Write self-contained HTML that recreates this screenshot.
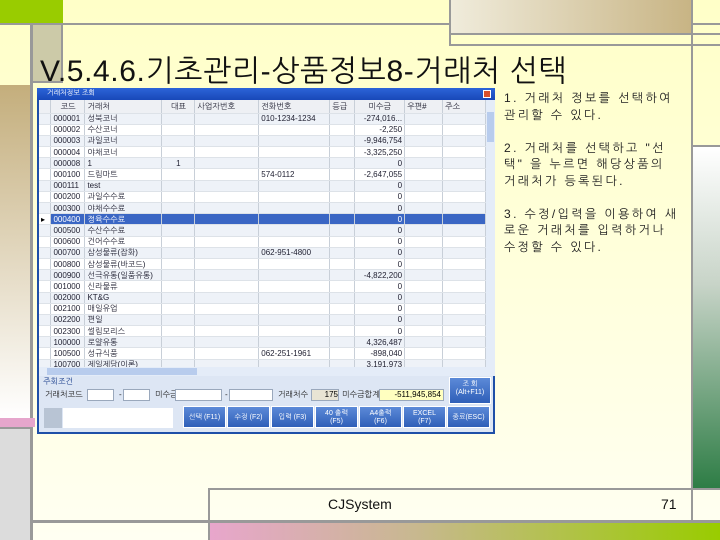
<!DOCTYPE html>
<html><head><meta charset="utf-8"><style>
*{margin:0;padding:0;box-sizing:border-box}
body{width:720px;height:540px;position:relative;overflow:hidden;background:linear-gradient(#ffffc8,#ffffe0 60%,#fffff2);font-family:"Liberation Sans","Noto Sans CJK KR",sans-serif}
.a{position:absolute}
.k{font-family:"Liberation Sans","NanumGothic","Noto Sans CJK KR",sans-serif}
table{border-collapse:collapse;font-size:8px;color:#223;table-layout:fixed}
tr{height:11.2px}
td{height:11.2px;border-right:1px solid #c8cfd8;border-bottom:1px solid #dde2e8;padding:0 2px;white-space:nowrap;overflow:hidden;line-height:9px}
tr:nth-child(even) td{background:#eef2f8}
tr td{background:#fff}
tr.sel td{background:#3a66c4;color:#fff}
td.n{text-align:right}
.btn{position:absolute;height:22px;width:43px;background:linear-gradient(#5c8ad8,#2f5fb8);color:#fff;font-size:7px;text-align:center;line-height:8px;padding-top:3px;border:1px solid #fff}
.inp{position:absolute;background:#fff;border:1px solid #9aa8bc;height:12px}
.lb{position:absolute;font-size:8px;color:#222}
.st div{white-space:nowrap}
</style></head><body>
<div class="a" style="left:0;top:0;width:63px;height:23px;background:#99cc00"></div>
<div class="a" style="left:0;top:23px;width:720px;height:2px;background:#999"></div>
<div class="a" style="left:450px;top:0;width:242px;height:33px;background:linear-gradient(90deg,#f0ecdc,#c8b484)"></div>
<div class="a" style="left:450px;top:33px;width:270px;height:2px;background:#999"></div>
<div class="a" style="left:450px;top:44px;width:270px;height:2px;background:#999"></div>
<div class="a" style="left:449px;top:0;width:2px;height:46px;background:#999"></div>
<div class="a" style="left:691px;top:0;width:2px;height:540px;background:#999"></div>
<div class="a" style="left:30px;top:23px;width:33px;height:60px;background:#cccaa8;border:2px solid #999"></div>
<div class="a" style="left:30px;top:23px;width:3px;height:517px;background:#999"></div>
<div class="a" style="left:0;top:85px;width:30px;height:333px;background:linear-gradient(#c4ae7c,#fff)"></div>
<div class="a" style="left:0;top:418px;width:35px;height:9px;background:#e6a6cc"></div>
<div class="a" style="left:0;top:427px;width:30px;height:2px;background:#999"></div>
<div class="a" style="left:0;top:429px;width:30px;height:111px;background:#dcdcdc"></div>
<div class="a" style="left:693px;top:145px;width:27px;height:2px;background:#999"></div>
<div class="a" style="left:693px;top:147px;width:27px;height:343px;background:linear-gradient(#fff,#c8d4c8 40%,#2c7c44)"></div>
<div class="a" style="left:208px;top:488px;width:512px;height:2px;background:#999"></div>
<div class="a" style="left:208px;top:488px;width:2px;height:52px;background:#999"></div>
<div class="a" style="left:30px;top:520px;width:690px;height:3px;background:#999"></div>
<div class="a" style="left:210px;top:523px;width:510px;height:17px;background:linear-gradient(90deg,#e8a6cc,#c8b890 40%,#99cc00)"></div>
<div class="a" style="left:328px;top:496px;font-size:14px;color:#111">CJSystem</div>
<div class="a" style="left:661px;top:496px;font-size:14px;color:#111">71</div>
<div class="a k" style="left:40px;top:52px;font-size:30px;color:#111;letter-spacing:0.6px;white-space:nowrap">V.5.4.6.기초관리-상품정보8-거래처 선택</div>
<div class="a k st" style="left:504px;top:90px;font-size:12px;line-height:16.5px;color:#222;letter-spacing:2.4px">
<div>1. 거래처 정보를 선택하여</div><div>관리할 수 있다.</div><br>
<div>2. 거래처를 선택하고 "선</div><div>택" 을 누르면 해당상품의</div><div>거래처가 등록된다.</div><br>
<div>3. 수정/입력을 이용하여 새</div><div>로운 거래처를 입력하거나</div><div>수정할 수 있다.</div></div>
<div class="a" style="left:37px;top:88px;width:458px;height:346px;background:#dde6f4;border:2px solid #1e4fa8;border-top:0">
 <div class="a k" style="left:-2px;top:0;width:458px;height:12px;background:linear-gradient(#2c64d8,#1848b8);color:#fff;font-size:7px;line-height:12px;padding-left:10px">거래처정보 조회</div>
 <div class="a" style="left:444px;top:2px;width:8px;height:8px;background:#d8502c;border:1px solid #fff"></div>
 <div class="a" style="left:0;top:12px;width:447px;height:267px;overflow:hidden;background:#fff">
 <table class="k">
 <tr style="height:13px"><td style="width:12px;height:13px;background:#eef0f4"></td><td style="width:34px;background:#eef0f4;text-align:center">코드</td><td style="width:77px;background:#eef0f4">거래처</td><td style="width:33px;background:#eef0f4;text-align:center">대표</td><td style="width:64px;background:#eef0f4">사업자번호</td><td style="width:71px;background:#eef0f4">전화번호</td><td style="width:25px;background:#eef0f4">등급</td><td style="width:50px;background:#eef0f4;text-align:center">미수금</td><td style="width:38px;background:#eef0f4">우편#</td><td style="width:43px;background:#eef0f4">주소</td></tr>
 <tr><td></td><td>000001</td><td>성북코너</td><td></td><td></td><td>010-1234-1234</td><td></td><td class="n">-274,016...</td><td></td><td></td></tr>
 <tr><td></td><td>000002</td><td>수산코너</td><td></td><td></td><td></td><td></td><td class="n">-2,250</td><td></td><td></td></tr>
 <tr><td></td><td>000003</td><td>과일코너</td><td></td><td></td><td></td><td></td><td class="n">-9,946,754</td><td></td><td></td></tr>
 <tr><td></td><td>000004</td><td>야채코너</td><td></td><td></td><td></td><td></td><td class="n">-3,325,250</td><td></td><td></td></tr>
 <tr><td></td><td>000008</td><td>1</td><td style="text-align:center">1</td><td></td><td></td><td></td><td class="n">0</td><td></td><td></td></tr>
 <tr><td></td><td>000100</td><td>드림마트</td><td></td><td></td><td>574-0112</td><td></td><td class="n">-2,647,055</td><td></td><td></td></tr>
 <tr><td></td><td>000111</td><td>test</td><td></td><td></td><td></td><td></td><td class="n">0</td><td></td><td></td></tr>
 <tr><td></td><td>000200</td><td>과일수수료</td><td></td><td></td><td></td><td></td><td class="n">0</td><td></td><td></td></tr>
 <tr><td></td><td>000300</td><td>야채수수료</td><td></td><td></td><td></td><td></td><td class="n">0</td><td></td><td></td></tr>
 <tr class="sel"><td style="background:#fff;color:#000">▸</td><td>000400</td><td>정육수수료</td><td></td><td></td><td></td><td></td><td class="n">0</td><td></td><td></td></tr>
 <tr><td></td><td>000500</td><td>수산수수료</td><td></td><td></td><td></td><td></td><td class="n">0</td><td></td><td></td></tr>
 <tr><td></td><td>000600</td><td>건어수수료</td><td></td><td></td><td></td><td></td><td class="n">0</td><td></td><td></td></tr>
 <tr><td></td><td>000700</td><td>삼성물류(잡화)</td><td></td><td></td><td>062-951-4800</td><td></td><td class="n">0</td><td></td><td></td></tr>
 <tr><td></td><td>000800</td><td>삼성물류(바코드)</td><td></td><td></td><td></td><td></td><td class="n">0</td><td></td><td></td></tr>
 <tr><td></td><td>000900</td><td>선극유통(일품유통)</td><td></td><td></td><td></td><td></td><td class="n">-4,822,200</td><td></td><td></td></tr>
 <tr><td></td><td>001000</td><td>신라물류</td><td></td><td></td><td></td><td></td><td class="n">0</td><td></td><td></td></tr>
 <tr><td></td><td>002000</td><td>KT&amp;G</td><td></td><td></td><td></td><td></td><td class="n">0</td><td></td><td></td></tr>
 <tr><td></td><td>002100</td><td>매일유업</td><td></td><td></td><td></td><td></td><td class="n">0</td><td></td><td></td></tr>
 <tr><td></td><td>002200</td><td>편일</td><td></td><td></td><td></td><td></td><td class="n">0</td><td></td><td></td></tr>
 <tr><td></td><td>002300</td><td>썰림모리스</td><td></td><td></td><td></td><td></td><td class="n">0</td><td></td><td></td></tr>
 <tr><td></td><td>100000</td><td>로얄유통</td><td></td><td></td><td></td><td></td><td class="n">4,326,487</td><td></td><td></td></tr>
 <tr><td></td><td>100500</td><td>성규식품</td><td></td><td></td><td>062-251-1961</td><td></td><td class="n">-898,040</td><td></td><td></td></tr>
 <tr><td></td><td>100700</td><td>제일제당(이론)</td><td></td><td></td><td></td><td></td><td class="n">3,191,973</td><td></td><td></td></tr>
 </table>
 </div>
 <div class="a" style="left:447px;top:12px;width:9px;height:267px;background:#e4ecf8"><div style="margin:12px 0 0 1px;width:7px;height:30px;background:#b8cced"></div></div>
 <div class="a" style="left:0;top:279px;width:456px;height:9px;background:#e4ecf8"><div style="margin:1px 0 0 8px;width:150px;height:7px;background:#b8cced"></div></div>
 <div class="lb k" style="left:4px;top:289px;color:#1b3f8c">주회조건</div>
 <div class="lb k" style="left:6px;top:302px">거래처코드</div>
 <div class="inp" style="left:48px;top:301px;width:27px"></div>
 <div class="lb" style="left:80px;top:302px">-</div>
 <div class="inp" style="left:84px;top:301px;width:27px"></div>
 <div class="lb k" style="left:116px;top:302px">미수금</div>
 <div class="inp" style="left:136px;top:301px;width:47px"></div>
 <div class="lb" style="left:186px;top:302px">-</div>
 <div class="inp" style="left:190px;top:301px;width:44px"></div>
 <div class="lb k" style="left:239px;top:302px">거래처수</div>
 <div class="inp" style="left:272px;top:301px;width:28px;background:#e8e4d4;font-size:8px;text-align:right;line-height:10px">175</div>
 <div class="lb k" style="left:303px;top:302px">미수금합계</div>
 <div class="inp" style="left:340px;top:301px;width:65px;background:#ffffc0;font-size:8px;text-align:right;line-height:10px;padding-right:2px">-511,945,854</div>
 <div class="btn k" style="left:410px;top:289px;width:42px;height:27px">조 회<br>(Alt+F11)</div>
 <div class="a" style="left:5px;top:320px;width:18px;height:20px;background:#b8c4d4"></div>
 <div class="a" style="left:24px;top:320px;width:110px;height:20px;background:#fff"></div>
 <div class="btn k" style="left:144px;top:318px;line-height:16px">선택 (F11)</div>
 <div class="btn k" style="left:188px;top:318px;line-height:16px">수정 (F2)</div>
 <div class="btn k" style="left:232px;top:318px;line-height:16px">입력 (F3)</div>
 <div class="btn k" style="left:276px;top:318px">40 출력<br>(F5)</div>
 <div class="btn k" style="left:320px;top:318px">A4출력<br>(F6)</div>
 <div class="btn k" style="left:364px;top:318px">EXCEL<br>(F7)</div>
 <div class="btn k" style="left:408px;top:318px;line-height:16px">종료(ESC)</div>
</div>
</body></html>
